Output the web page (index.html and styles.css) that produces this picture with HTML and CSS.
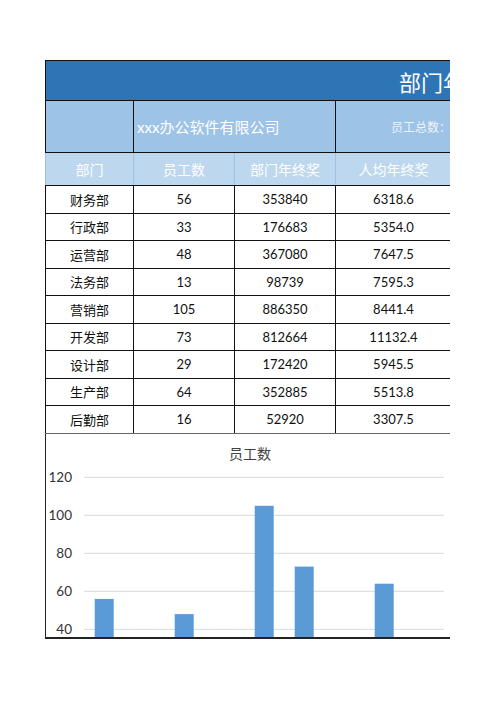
FILE: index.html
```html
<!DOCTYPE html>
<html lang="zh-CN">
<head>
    <meta charset="UTF-8">
    <meta name="viewport" content="width=device-width, initial-scale=1.0">
    <title>部门年终奖统计表</title>
    <link rel="stylesheet" href="styles.css">
</head>
<body>
    <div class="sheet">
        <table class="bonus">
            <colgroup>
                <col class="c1">
                <col class="c2">
                <col class="c3">
                <col class="c4">
            </colgroup>
            <tr class="title-row">
                <td colspan="4"><div class="title">部门年终奖统计表</div></td>
            </tr>
            <tr class="company-row">
                <td></td>
                <td colspan="2" class="company">xxx办公软件有限公司</td>
                <td class="total"><div>员工总数：</div></td>
            </tr>
            <tr class="head-row">
                <th>部门</th>
                <th>员工数</th>
                <th>部门年终奖</th>
                <th>人均年终奖</th>
            </tr>
            <tr><td>财务部</td><td>56</td><td>353840</td><td>6318.6</td></tr>
            <tr><td>行政部</td><td>33</td><td>176683</td><td>5354.0</td></tr>
            <tr><td>运营部</td><td>48</td><td>367080</td><td>7647.5</td></tr>
            <tr><td>法务部</td><td>13</td><td>98739</td><td>7595.3</td></tr>
            <tr><td>营销部</td><td>105</td><td>886350</td><td>8441.4</td></tr>
            <tr><td>开发部</td><td>73</td><td>812664</td><td>11132.4</td></tr>
            <tr><td>设计部</td><td>29</td><td>172420</td><td>5945.5</td></tr>
            <tr><td>生产部</td><td>64</td><td>352885</td><td>5513.8</td></tr>
            <tr class="last"><td>后勤部</td><td>16</td><td>52920</td><td>3307.5</td></tr>
        </table>

        <!-- 员工数 柱形图 -->
        <div class="chart">
            <svg width="404" height="203" viewBox="0 0 404 203">
                <text class="chart-title" x="204" y="25" text-anchor="middle">员工数</text>
                <g class="grid">
                    <line x1="38" y1="43.3" x2="398" y2="43.3"/>
                    <line x1="38" y1="81.3" x2="398" y2="81.3"/>
                    <line x1="38" y1="119.3" x2="398" y2="119.3"/>
                    <line x1="38" y1="157.3" x2="398" y2="157.3"/>
                    <line x1="38" y1="195.3" x2="398" y2="195.3"/>
                </g>
                <g class="axis">
                    <text x="26" y="48">120</text>
                    <text x="26" y="86">100</text>
                    <text x="26" y="124">80</text>
                    <text x="26" y="162">60</text>
                    <text x="26" y="200">40</text>
                </g>
                <g class="bars">
                    <rect x="48.7" y="164.9" width="19" height="40"/>
                    <rect x="128.7" y="180.1" width="19" height="30"/>
                    <rect x="208.7" y="71.8" width="19" height="140"/>
                    <rect x="248.7" y="132.6" width="19" height="80"/>
                    <rect x="328.7" y="149.7" width="19" height="60"/>
                </g>
            </svg>
        </div>
    </div>
</body>
</html>
```

FILE: styles.css
```css
body {
    margin: 0;
    background-color: #fff;
    font-family: Lato, "Noto Sans CJK SC", sans-serif;
}
.sheet {
    margin: 60px 0 0 45px;
    width: 405px;
    overflow: hidden;
}
.bonus {
    width: 406px;
    table-layout: fixed;
    border-collapse: collapse;
    font-size: 13px;
    color: #111;
}
.c1 { width: 88px; }
.c2 { width: 101px; }
.c3 { width: 101px; }
.c4 { width: 116px; }
.bonus td, .bonus th {
    border: 1px solid #111;
    padding: 0;
    text-align: center;
    white-space: nowrap;
    overflow: hidden;
    height: 26.5px;
}
.title-row td {
    background-color: #2e75b6;
    height: 39px;
    border-right: none;
}
.title {
    padding-left: 353px;
    color: #fff;
    font-size: 22px;
    text-align: left;
    white-space: nowrap;
}
.company-row td {
    background-color: #9dc3e6;
    height: 51px;
    color: #fff;
}
.company {
    text-align: left !important;
    padding-left: 3px !important;
    font-size: 15px;
}
.total div {
    padding-left: 55px;
    text-align: left;
    font-size: 12px;
    color: #eef4fb;
}
.head-row th {
    background-color: #bdd7ee;
    color: #fff;
    font-weight: normal;
    font-size: 14px;
    height: 32px;
    border-left-color: #9dc3e6;
    border-right-color: #9dc3e6;
}
.bonus tr td:last-child {
    border-right-color: #777;
}
.last td {
    border-bottom-color: #666;
}
.chart {
    border-left: 1px solid #222;
    border-bottom: 2px solid #222;
    height: 203px;
    overflow: hidden;
}
.chart svg {
    display: block;
}
.chart-title {
    font-size: 14px;
    fill: #404040;
    font-family: "Noto Sans CJK SC", sans-serif;
}
.grid line {
    stroke: #d9d9d9;
    stroke-width: 1;
}
.axis text {
    font-size: 13.5px;
    fill: #333;
    text-anchor: end;
}
.bars rect {
    fill: #5b9bd5;
}
```
